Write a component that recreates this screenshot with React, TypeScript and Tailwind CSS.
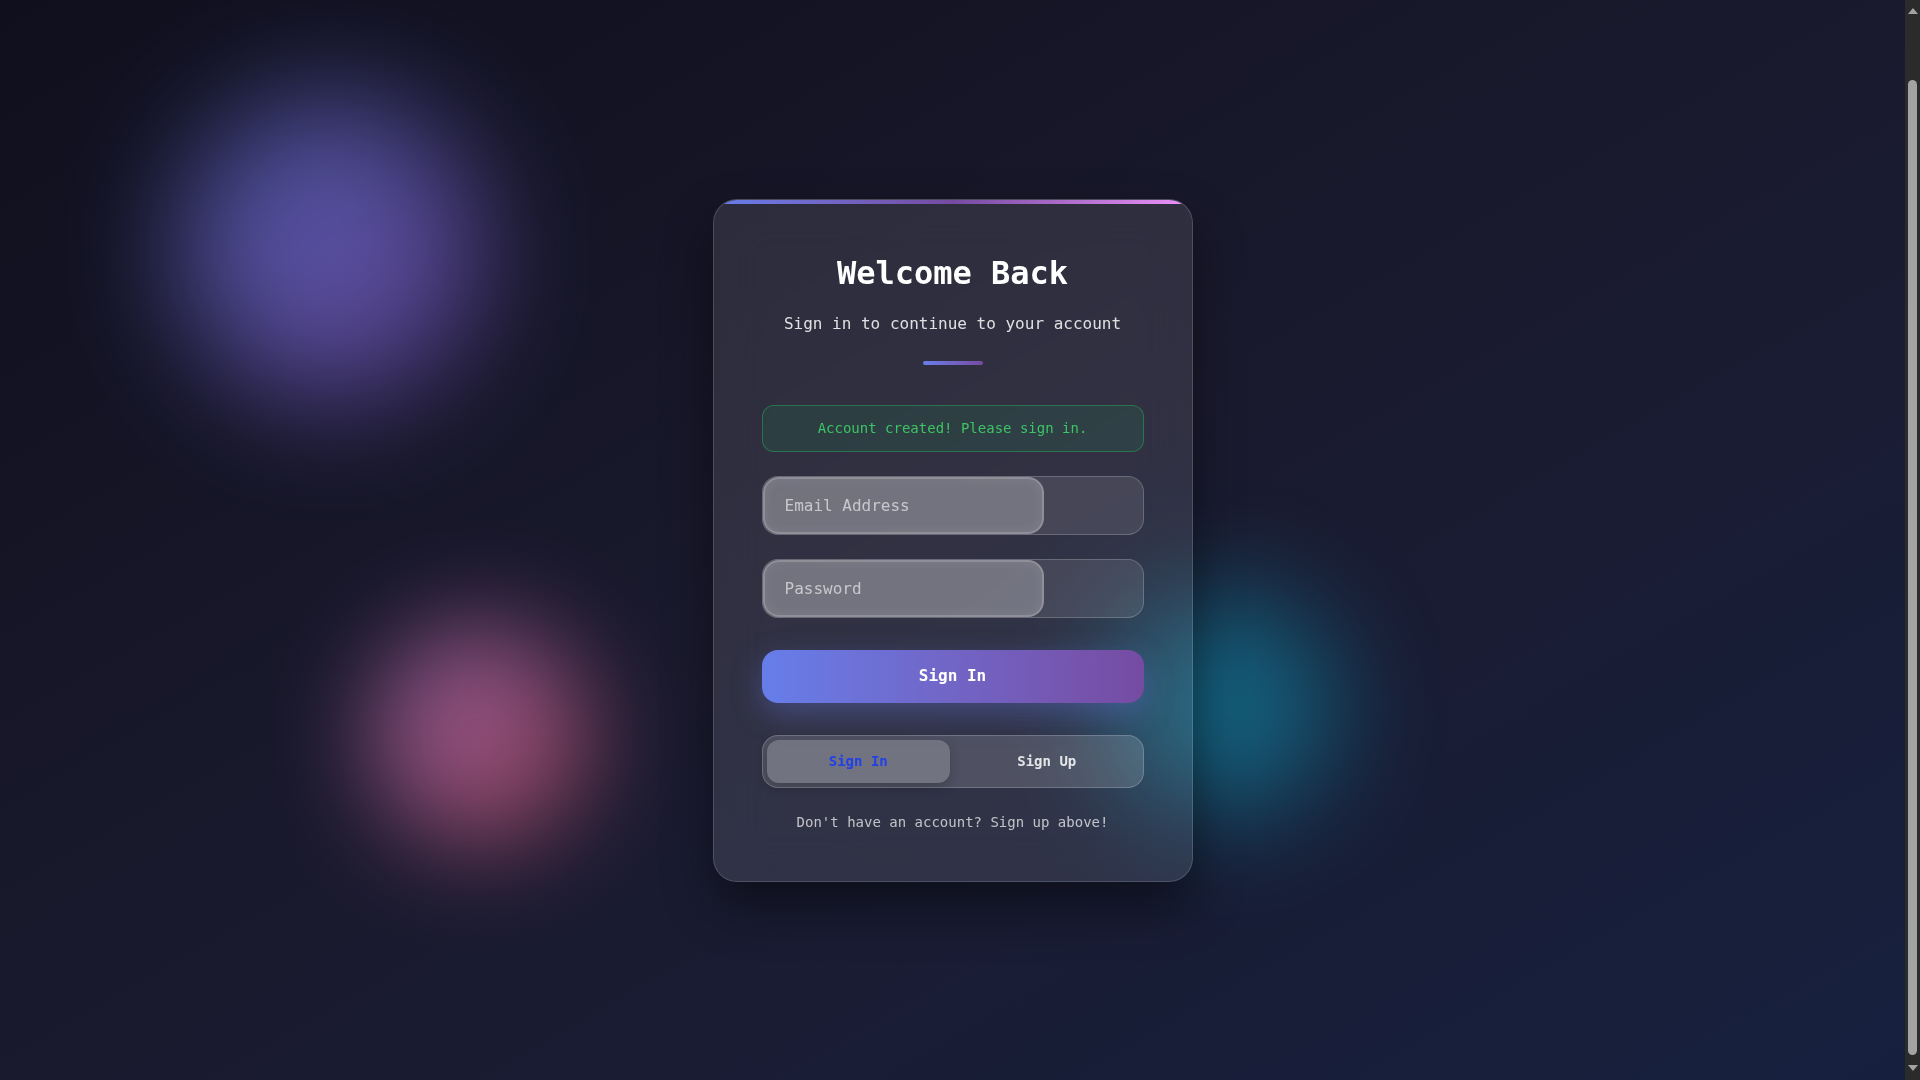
import { useState } from 'react';

const font = { fontFamily: '"DejaVu Sans Mono", "Liberation Mono", monospace' };

const Field = ({ type, placeholder }: { type: string; placeholder: string }) => (
  <div className="flex h-[59px] w-full rounded-2xl border border-white/20 bg-white/10">
    <input
      type={type}
      placeholder={placeholder}
      className="h-[57px] w-[281px] rounded-2xl border-2 border-white/20 bg-white/25 px-[20px] text-base text-white shadow-[inset_0_0_12px_rgba(255,255,255,0.08)] outline-none placeholder:text-white/60"
      style={font}
    />
  </div>
);

const Scrollbar = () => (
  <div className="flex h-screen w-[15px] shrink-0 flex-col items-center bg-[#2b2b2b]">
    <div className="mt-[8px] h-0 w-0 border-x-[5px] border-b-[6px] border-x-transparent border-b-[#a3a3a3]" />
    <div className="mt-[66px] h-[975px] w-[9px] rounded-full bg-[#a3a3a3]" />
    <div className="mt-[10px] h-0 w-0 border-x-[5px] border-t-[6px] border-x-transparent border-t-[#a3a3a3]" />
  </div>
);

const App = () => {
  const [mode, setMode] = useState<'in' | 'up'>('in');

  return (
    <div className="flex h-screen overflow-hidden" style={font}>
      <div className="relative flex-1 overflow-hidden bg-linear-to-br from-[#0f0f1d] via-[#1a1a2e] to-[#16203e]">
        <div className="pointer-events-none absolute left-[180px] top-[98px] h-[300px] w-[300px] rounded-full bg-linear-to-br from-[#667eea] to-[#8a5ad0] opacity-65 blur-[60px]" />
        <div className="pointer-events-none absolute left-[370px] top-[625px] h-[220px] w-[220px] rounded-full bg-linear-to-br from-[#f093fb] to-[#f5576c] opacity-55 blur-[50px]" />
        <div className="pointer-events-none absolute left-[1115px] top-[595px] h-[220px] w-[220px] rounded-full bg-[#0ea5c8] opacity-50 blur-[55px]" />

        <div className="relative flex h-full items-center justify-center">
          <div className="relative w-[480px] overflow-hidden rounded-[24px] border border-white/15 bg-white/10 px-12 pb-12 pt-[53px] shadow-[0_25px_50px_rgba(0,0,0,0.45)] backdrop-blur-xl">
            <div className="absolute left-0 right-0 top-0 h-1 bg-linear-to-r from-[#667eea] via-[#764ba2] to-[#f093fb]" />

            <h1 className="text-center text-[32px] font-bold leading-10 text-white">Welcome Back</h1>
            <p className="mt-[19px] text-center text-base leading-6 text-white/85">Sign in to continue to your account</p>
            <div className="mx-auto mt-[25px] h-1 w-[60px] rounded-full bg-linear-to-r from-[#667eea] to-[#764ba2]" />

            <div className="mt-10 rounded-xl border border-[#22c55e]/40 bg-[#22c55e]/10 py-3 text-center text-sm leading-[21px] text-[#3ec464]">
              Account created! Please sign in.
            </div>

            <div className="mt-6 flex flex-col gap-6">
              <Field type="email" placeholder="Email Address" />
              <Field type="password" placeholder="Password" />
            </div>

            <button className="mt-8 h-[53px] w-full rounded-2xl bg-linear-to-r from-[#667eea] to-[#764ba2] text-base font-bold text-white shadow-[0_10px_30px_rgba(102,126,234,0.35)]">
              Sign In
            </button>

            <div className="mt-8 flex h-[53px] w-full gap-[5px] rounded-2xl border border-white/20 bg-white/15 p-[4px]">
              <button
                onClick={() => setMode('in')}
                className={`flex-1 rounded-xl text-sm font-bold ${mode === 'in' ? 'bg-white/20 text-[#2040e8] shadow-[0_4px_12px_rgba(0,0,0,0.2)]' : 'text-white/85'}`}
              >
                Sign In
              </button>
              <button
                onClick={() => setMode('up')}
                className={`flex-1 rounded-xl text-sm font-bold ${mode === 'up' ? 'bg-white/20 text-[#2040e8] shadow-[0_4px_12px_rgba(0,0,0,0.2)]' : 'text-white/85'}`}
              >
                Sign Up
              </button>
            </div>

            <p className="mt-6 text-center text-sm leading-[21px] text-white/70">Don't have an account? Sign up above!</p>
          </div>
        </div>
      </div>
      <Scrollbar />
    </div>
  );
};

export default App;
